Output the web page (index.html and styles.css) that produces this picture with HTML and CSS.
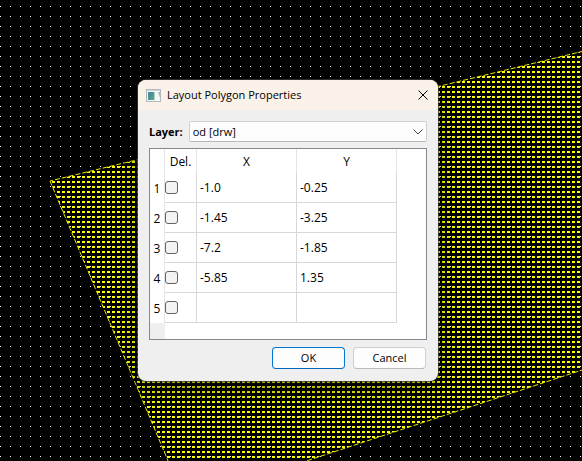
FILE: index.html
```html
<!DOCTYPE html>
<html lang="en">
<head>
<meta charset="utf-8">
<title>Layout Polygon Properties</title>
<link rel="stylesheet" href="styles.css">
</head>
<body>
<svg class="canvas" aria-hidden="true">
  <defs>
    <pattern id="grid" width="10" height="10" patternUnits="userSpaceOnUse">
      <rect x="0" y="6" width="1" height="1" fill="#fff"/>
    </pattern>
    <pattern id="hatch" width="5" height="5" patternUnits="userSpaceOnUse">
      <rect x="2" y="1" width="3" height="2" fill="#ff0"/>
    </pattern>
  </defs>
  <rect width="100%" height="100%" fill="#000"/>
  <rect width="100%" height="100%" fill="url(#grid)"/>
  <polygon points="50,181 185,501 670,341 625,41" fill="url(#hatch)" stroke="#e8e800" stroke-width="1" stroke-dasharray="5 2"/>
</svg>
<form class="dialog" role="dialog" aria-labelledby="dialog-title">
  <header class="titlebar">
    <svg class="app-icon" viewBox="0 0 15 13" aria-hidden="true">
      <defs>
        <linearGradient id="pane" x1="0" y1="0" x2="1" y2="1">
          <stop offset="0" stop-color="#4480ad"/>
          <stop offset="1" stop-color="#52ad75"/>
        </linearGradient>
      </defs>
      <rect x="0.5" y="0.5" width="14" height="12" fill="#f4f6f8" stroke="#b4b7bb"/>
      <rect x="1" y="1" width="13" height="1" fill="#d3d7dc"/>
      <rect x="2" y="3" width="6" height="8" fill="url(#pane)"/>
      <rect x="8" y="3" width="1" height="8" fill="#b9cdd3"/>
      <path d="M12 3h2v6z" fill="#8fc5b4"/>
    </svg>
    <h1 class="title" id="dialog-title">Layout Polygon Properties</h1>
    <button class="close" type="button" aria-label="Close">
      <svg viewBox="0 0 10 10" aria-hidden="true"><path d="M0.5 0.5L9.5 9.5M9.5 0.5L0.5 9.5"/></svg>
    </button>
  </header>
  <div class="content">
    <div class="field">
      <label class="field-label" for="layer">Layer:</label>
      <div class="combo">
        <select id="layer"><option>od [drw]</option></select>
        <svg class="chevron" viewBox="0 0 10 6" aria-hidden="true"><path d="M0.5 0.5L5 5L9.5 0.5"/></svg>
      </div>
    </div>
    <div class="table-frame">
      <table class="points">
        <colgroup><col class="col-index"><col class="col-delete"><col class="col-value"><col class="col-value"></colgroup>
        <thead>
          <tr><td></td><th scope="col">Del.</th><th scope="col">X</th><th scope="col">Y</th></tr>
        </thead>
        <tbody>
          <tr><th scope="row">1</th><td class="check"><input type="checkbox" aria-label="Delete point 1"></td><td>-1.0</td><td>-0.25</td></tr>
          <tr><th scope="row">2</th><td class="check"><input type="checkbox" aria-label="Delete point 2"></td><td>-1.45</td><td>-3.25</td></tr>
          <tr><th scope="row">3</th><td class="check"><input type="checkbox" aria-label="Delete point 3"></td><td>-7.2</td><td>-1.85</td></tr>
          <tr><th scope="row">4</th><td class="check"><input type="checkbox" aria-label="Delete point 4"></td><td>-5.85</td><td>1.35</td></tr>
          <tr><th scope="row">5</th><td class="check"><input type="checkbox" aria-label="Delete point 5"></td><td></td><td></td></tr>
        </tbody>
      </table>
      <div class="index-rest"></div>
    </div>
    <div class="actions">
      <button class="btn btn-default" type="submit">OK</button>
      <button class="btn" type="button">Cancel</button>
    </div>
  </div>
</form>
</body>
</html>
```
FILE: styles.css
```css
* {
  box-sizing: border-box;
}

body {
  margin: 0;
  min-height: 100vh;
  overflow: hidden;
  background: #000;
  color: #000;
  font: 11px/16px "Open Sans", "Noto Sans", sans-serif;
}

.canvas {
  position: absolute;
  inset: 0;
  width: 100%;
  height: 100%;
}

/* A window placed freely over the canvas. */
.dialog {
  position: absolute;
  left: 138px;
  top: 80px;
  width: 300px;
  border-radius: 8px;
  overflow: hidden;
  background: #efefef;
  box-shadow: 0 0 0 1px rgba(60, 60, 60, 0.7), 0 8px 24px rgba(0, 0, 0, 0.45);
}

.titlebar {
  display: flex;
  align-items: center;
  height: 30px;
  padding: 0 10px 0 8px;
  background: #faf1e8;
}

.app-icon {
  width: 15px;
  height: 13px;
  margin-right: 6px;
}

.title {
  flex: 1;
  margin: 0;
  font-size: 11px;
  font-weight: 400;
  white-space: nowrap;
}

.close {
  display: flex;
  padding: 0;
  border: 0;
  background: none;
}

.close svg {
  width: 10px;
  height: 10px;
  fill: none;
  stroke: #000;
}

.content {
  padding: 11px 11px 12px;
}

.field {
  display: flex;
  align-items: center;
  gap: 6px;
  margin-bottom: 6px;
}

.field-label {
  font-weight: 700;
}

.combo {
  position: relative;
  flex: 1;
}

.combo select {
  display: block;
  width: 100%;
  height: 21px;
  padding: 0 3px;
  border: 1px solid #d0d0d0;
  border-bottom-color: #b8b8b8;
  border-radius: 2px;
  appearance: none;
  background: #fdfdfd;
  color: inherit;
  font: inherit;
}

.chevron {
  position: absolute;
  right: 4px;
  top: 8px;
  width: 10px;
  height: 6px;
  fill: none;
  stroke: #444;
  pointer-events: none;
}

.table-frame {
  border: 1px solid #828790;
  background: #fff;
}

.points {
  table-layout: fixed;
  width: 247px;
  border-collapse: separate;
  border-spacing: 0;
  font-size: 12px;
}

.col-index {
  width: 15px;
}

.col-delete {
  width: 32px;
}

.col-value {
  width: 100px;
}

.points th,
.points td {
  height: 30px;
  padding: 0 3px;
  border-right: 1px solid #d8d8d8;
  border-bottom: 1px solid #d8d8d8;
  font-weight: 400;
  text-align: left;
}

.points thead th,
.points thead td {
  height: 24px;
  padding: 2px 0 0;
  border-right-color: #e5e5e5;
  border-bottom: 0;
  text-align: center;
}

.points tbody th {
  padding: 1px 0 0;
  border-right-color: #e5e5e5;
  border-bottom: 0;
  text-align: center;
}

.points .check {
  padding: 0;
}

.check input {
  display: block;
  width: 13px;
  height: 13px;
  margin: 0;
  border: 1px solid #626262;
  border-radius: 3px;
  appearance: none;
  background: #f3f3f3;
}

.index-rest {
  width: 15px;
  height: 16px;
  background: #efefef;
}

.actions {
  display: flex;
  justify-content: flex-end;
  gap: 8px;
  padding: 7px 1px 0 0;
}

.btn {
  width: 73px;
  height: 22px;
  padding: 0;
  border: 1px solid #d0d0d0;
  border-bottom-color: #bbb;
  border-radius: 4px;
  background: #fdfdfd;
  color: inherit;
  font: inherit;
}

.btn-default {
  border-color: #0078d4;
  border-bottom-color: #0067c0;
}
```
